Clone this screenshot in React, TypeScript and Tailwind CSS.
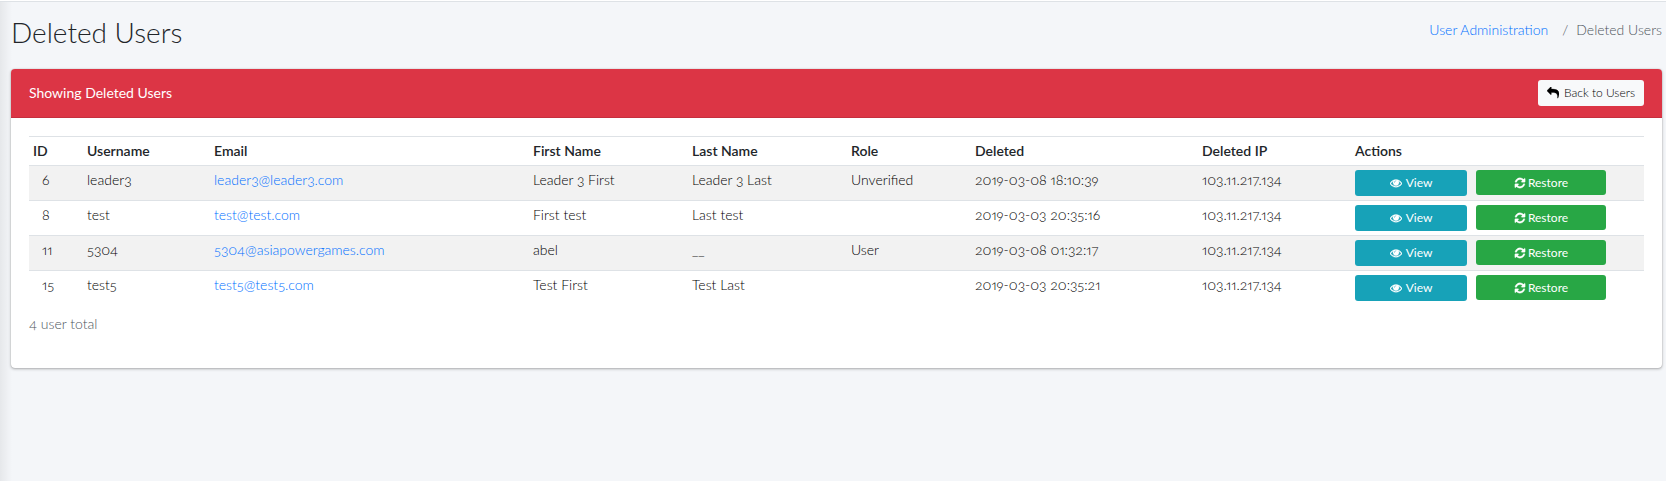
import React from "react";

type User = {
  id: number;
  username: string;
  email: string;
  first: string;
  last: string;
  role: string;
  deleted: string;
  ip: string;
};

const users: User[] = [
  { id: 6, username: "leader3", email: "leader3@leader3.com", first: "Leader 3 First", last: "Leader 3 Last", role: "Unverified", deleted: "2019-03-08 18:10:39", ip: "103.11.217.134" },
  { id: 8, username: "test", email: "test@test.com", first: "First test", last: "Last test", role: "", deleted: "2019-03-03 20:35:16", ip: "103.11.217.134" },
  { id: 11, username: "5304", email: "5304@asiapowergames.com", first: "abel", last: "__", role: "User", deleted: "2019-03-08 01:32:17", ip: "103.11.217.134" },
  { id: 15, username: "test5", email: "test5@test5.com", first: "Test First", last: "Test Last", role: "", deleted: "2019-03-03 20:35:21", ip: "103.11.217.134" },
];

const paths = {
  reply:
    "M1792 1120q0 166-127 451-3 7-10.5 24t-13.5 30-13 22q-12 17-28 17-15 0-23.5-10t-8.5-25q0-9 2.5-26.5t2.5-23.5q5-68 5-123 0-112-19.5-200.5t-54-153.5-89-112-112-80-134.5-51.5-145-27.5-158-8.5h-224v256q0 26-19 45t-45 19-45-19l-512-512q-19-19-19-45t19-45l512-512q19-19 45-19t45 19 19 45v256h224q713 0 875 403 53 134 53 333z",
  eye:
    "M1664 960q-152-236-381-353 61 104 61 225 0 185-131.5 316.5t-316.5 131.5-316.5-131.5-131.5-316.5q0-121 61-225-229 117-381 353 133 205 333.5 326.5t434.5 121.5 434.5-121.5 333.5-326.5zm-720-384q0-20-14-34t-34-14q-125 0-214.5 89.5t-89.5 214.5q0 20 14 34t34 14 34-14 14-34q0-86 61-147t147-61q20 0 34-14t14-34zm848 384q0 34-20 69-140 230-376.5 368.5t-499.5 138.5-499.5-139-376.5-368q-20-35-20-69t20-69q140-229 376.5-368t499.5-139 499.5 139 376.5 368q20 35 20 69z",
  refresh:
    "M1639 1056q0 5-1 7-64 268-268 434.5t-478 166.5q-146 0-282.5-55t-243.5-157l-129 129q-19 19-45 19t-45-19-19-45v-448q0-26 19-45t45-19h448q26 0 45 19t19 45-19 45l-137 137q71 66 161 102t187 36q134 0 250-65t186-179q11-17 53-117 8-23 30-23h192q13 0 22.5 9.5t9.5 22.5zm25-800v448q0 26-19 45t-45 19h-448q-26 0-45-19t-19-45 19-45l138-138q-148-137-349-137-134 0-250 65t-186 179q-11 17-53 117-8 23-30 23h-199q-13 0-22.5-9.5t-9.5-22.5v-7q65-268 270-434.5t480-166.5q146 0 284 55.5t245 156.5l130-129q19-19 45-19t45 19 19 45z",
};

function Icon({ name }: { name: keyof typeof paths }) {
  return (
    <svg viewBox="0 0 1792 1792" className="size-3 shrink-0" fill="currentColor" stroke="currentColor" strokeWidth="50" aria-hidden="true">
      <path d={paths[name]} />
    </svg>
  );
}

export default function App() {
  return (
    <div className="min-h-screen bg-[#f4f6f9] bg-[linear-gradient(to_right,rgba(0,0,0,0.06),rgba(0,0,0,0)_12px)] font-['Lato',sans-serif] text-sm leading-5 font-light oldstyle-nums proportional-nums text-[#212529]">
      <div className="h-[2px] border-b border-[#dee2e6] bg-white"></div>
      <div className="pr-1 pl-[11px]">
        <header className="flex items-start justify-between pt-[14px] pb-[21px]">
          <h1 className="text-[28px] leading-8 font-light">Deleted Users</h1>
          <nav aria-label="Breadcrumb" className="pt-1">
            <ol className="flex">
              <li>
                <a href="#users" className="text-[#006fff]">User Administration</a>
              </li>
              <li className="flex pl-[14px] text-[#4d555c]">
                <span className="pr-2" aria-hidden="true">/</span>
                Deleted Users
              </li>
            </ol>
          </nav>
        </header>

        <main className="overflow-hidden rounded bg-white shadow-[0_0_1px_rgba(0,0,0,0.3),0_1px_3px_rgba(0,0,0,0.3)]">
          <div className="flex items-center justify-between border-b border-[#c52f3e] bg-[#dc3545] px-[18px] py-[11px] text-white">
            <h2 className="font-normal">Showing Deleted Users</h2>
            <a href="#back" className="flex h-[26px] items-center gap-[5px] rounded-[3px] bg-[#f8f9fa] px-[9px] text-xs text-black">
              <Icon name="reply" />
              Back to Users
            </a>
          </div>

          <div className="px-[18px] pt-[18px] pb-[34px]">
            <table className="w-full table-fixed border-collapse text-left">
              <colgroup>
                <col className="w-[54px]" />
                <col className="w-[127px]" />
                <col className="w-[319px]" />
                <col className="w-[159px]" />
                <col className="w-[159px]" />
                <col className="w-[124px]" />
                <col className="w-[227px]" />
                <col className="w-[153px]" />
                <col className="w-[120px]" />
                <col className="w-[139px]" />
                <col className="w-[34px]" />
              </colgroup>
              <thead>
                <tr className="border-y border-[#dee2e6] *:px-1 *:py-1 *:font-semibold">
                  <th>ID</th>
                  <th>Username</th>
                  <th>Email</th>
                  <th>First Name</th>
                  <th>Last Name</th>
                  <th>Role</th>
                  <th>Deleted</th>
                  <th>Deleted IP</th>
                  <th colSpan={3}>Actions</th>
                </tr>
              </thead>
              <tbody className="text-black">
                {users.map((u) => (
                  <tr key={u.id} className="border-b border-[#dee2e6] align-top *:p-1 last:border-b-0 odd:bg-[#f2f2f2]">
                    <td>
                      <span className="pl-[9px]">{u.id}</span>
                    </td>
                    <td>{u.username}</td>
                    <td>
                      <a href={`mailto:${u.email}`} className="text-[#006fff]">{u.email}</a>
                    </td>
                    <td>{u.first}</td>
                    <td>{u.last}</td>
                    <td>{u.role}</td>
                    <td>{u.deleted}</td>
                    <td>{u.ip}</td>
                    <td>
                      <a href={`#user-${u.id}`} className="flex h-[26px] items-center justify-center gap-1 rounded-[3px] bg-[#17a2b8] text-xs font-normal text-white">
                        <Icon name="eye" />
                        View
                      </a>
                    </td>
                    <td className="pl-[5px]!">
                      <button type="button" className="flex h-[25px] w-full items-center justify-center gap-[2px] rounded-[3px] bg-[#28a745] text-xs font-normal text-white">
                        <Icon name="refresh" />
                        Restore
                      </button>
                    </td>
                    <td></td>
                  </tr>
                ))}
              </tbody>
            </table>
            <p className="pt-[9px] text-[#4d555c]">4 user total</p>
          </div>
        </main>
      </div>
    </div>
  );
}
